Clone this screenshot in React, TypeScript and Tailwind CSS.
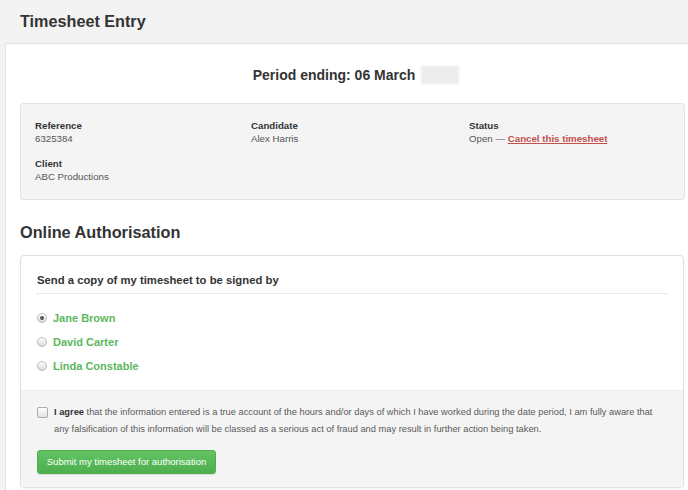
import { useState } from 'react';

const signers = ['Jane Brown', 'David Carter', 'Linda Constable'];

function Radio({ checked }: { checked: boolean }) {
	return (
		<span className="flex h-[10px] w-[10px] shrink-0 items-center justify-center rounded-full border border-[#b8b8b8] bg-gradient-to-b from-[#fdfdfd] to-[#dcdcdc]">
			{checked && <span className="h-[4px] w-[4px] rounded-full bg-[#555]" />}
		</span>
	);
}

export default function App() {
	const [selected, setSelected] = useState(0);

	return (
		<div className="min-h-[490px] bg-[#f3f3f3] font-['Liberation_Sans',Arial,sans-serif] text-[#333]">
			<div className="flex h-[43px] items-center px-5">
				<h1 className="text-[16.2px] font-bold leading-none">Timesheet Entry</h1>
			</div>

			<div className="ml-[5px] border-l border-t border-[#e2e2e2] bg-white pb-6 pl-[14px] pr-[3px]">
				<div className="flex items-center justify-center pl-[7px] pt-[22px]">
					<span className="text-[14px] font-bold leading-[18px]">Period ending: 06 March</span>
					<span className="ml-[6px] inline-block h-[18px] w-[38px] bg-[#ececec] blur-[1px]" />
				</div>

				<div className="mt-[19px] rounded-[3px] border border-[#e3e3e3] bg-[#f4f4f4] pb-[15px] pl-[14px] pt-[15px] text-[9.7px]">
					<div className="grid grid-cols-[216px_218px_1fr] gap-y-[11px]">
						<div>
							<div className="font-bold leading-[13px]">Reference</div>
							<div className="leading-[14px] text-[#555]">6325384</div>
						</div>
						<div>
							<div className="font-bold leading-[13px]">Candidate</div>
							<div className="leading-[14px] text-[#555]">Alex Harris</div>
						</div>
						<div>
							<div className="font-bold leading-[13px]">Status</div>
							<div className="leading-[14px] text-[#555]">
								Open —{' '}
								<a href="#" className="font-bold text-[#c2504c] underline">
									Cancel this timesheet
								</a>
							</div>
						</div>
						<div>
							<div className="font-bold leading-[13px]">Client</div>
							<div className="leading-[14px] text-[#555]">ABC Productions</div>
						</div>
					</div>
				</div>

				<h2 className="mt-[22px] text-[16.3px] font-bold leading-[20px]">Online Authorisation</h2>

				<div className="mr-[1px] mt-[13px] overflow-hidden rounded-[4px] border border-[#e0e0e0] shadow-[0_1px_2px_rgba(0,0,0,0.06)]">
					<div className="px-[16px] pb-[17px] pt-[17px]">
						<div className="border-b border-dotted border-[#d8d8d8] pb-[6px] text-[11.3px] font-bold leading-[14px]">
							Send a copy of my timesheet to be signed by
						</div>
						<div className="mt-[17px] flex flex-col gap-[10px]">
							{signers.map((name, i) => (
								<label
									key={name}
									className="flex cursor-pointer items-center gap-[6px] text-[11px] font-bold leading-[14px] text-[#5cb85c]"
									onClick={() => setSelected(i)}
								>
									<Radio checked={selected === i} />
									{name}
								</label>
							))}
						</div>
					</div>

					<div className="border-t border-[#ebebeb] bg-[#f4f4f4] px-[16px] pb-[13px] pt-[13px]">
						<div className="flex gap-[6px] text-[9.3px] leading-[17px] text-[#5a5a5a]">
							<span className="mt-[3px] h-[11px] w-[11px] shrink-0 rounded-[2px] border border-[#aaa] bg-gradient-to-b from-white to-[#e2e2e2]" />
							<p className="max-w-[612px]">
								<b className="text-[#333]">I agree</b> that the information entered is a true account of the
								hours and/or days of which I have worked during the date period, I am fully aware that any
								falsification of this information will be classed as a serious act of fraud and may result in
								further action being taken.
							</p>
						</div>
						<button className="mt-[12px] h-[24px] w-[179px] rounded-[3px] border border-[#4cae4c] bg-gradient-to-b from-[#62c462] to-[#4cae4c] text-[9.5px] text-white shadow-[0_1px_1px_rgba(0,0,0,0.1)]">
							Submit my timesheet for authorisation
						</button>
					</div>
				</div>
			</div>
		</div>
	);
}
